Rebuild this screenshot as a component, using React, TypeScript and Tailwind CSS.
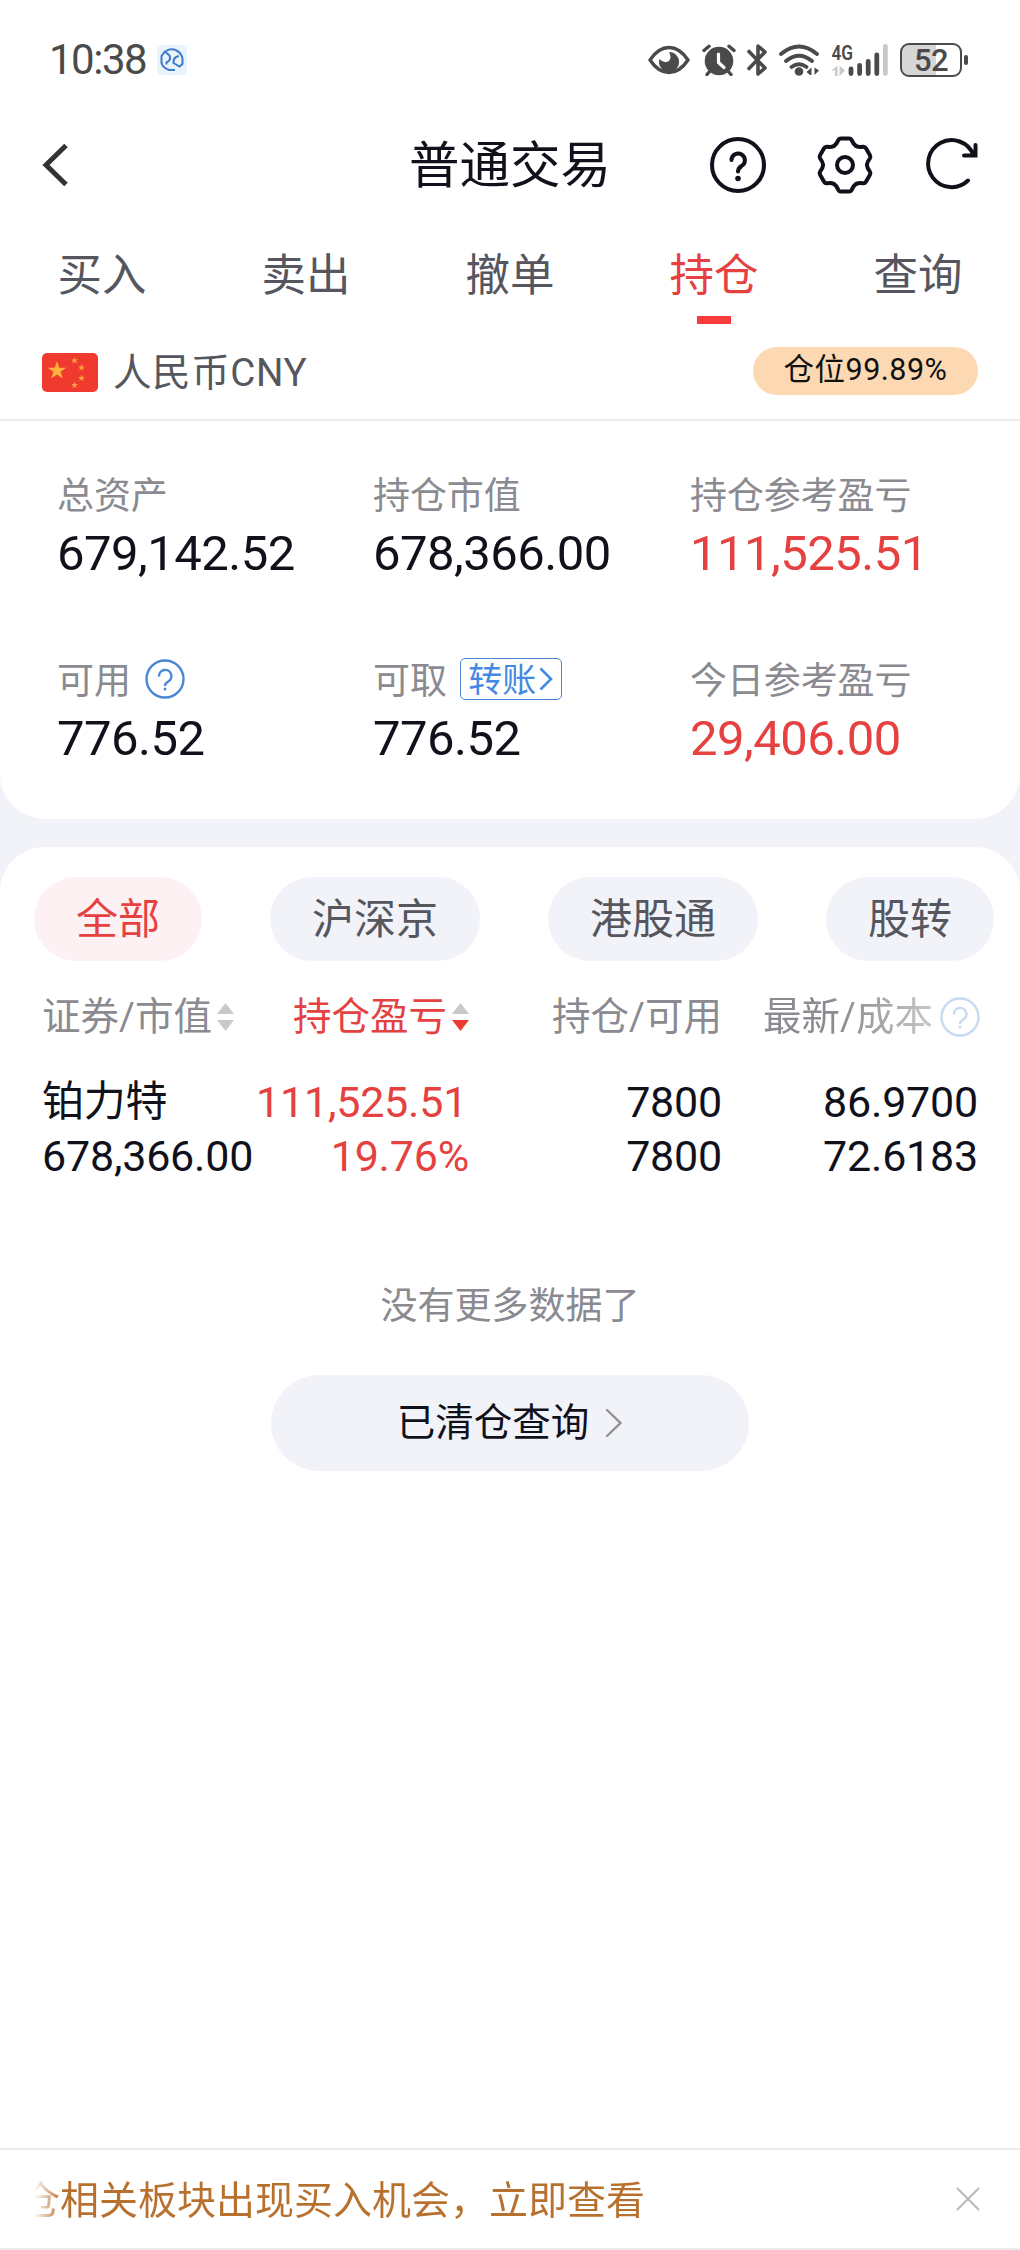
import type { ReactNode } from "react";

const tabs = ["买入", "卖出", "撤单", "持仓", "查询"];
const filters = ["全部", "沪深京", "港股通", "股转"];
const gearTeeth = [0, 60, 120, 180, 240, 300];

function StatusBar() {
  return (
    <div className="flex h-[120px] items-center justify-between pl-[49px] pr-[52px] text-[#4a4a4a]">
      <div className="flex items-center">
        <span className="w-[108px] whitespace-nowrap text-[42px] leading-[42px] tracking-[-1.500px]">10:38</span>
        <svg width="30" height="30" viewBox="0 0 30 30" fill="none">
          <rect width="30" height="30" rx="6" fill="#eaf2fb" />
          <g stroke="#3d7cc9" strokeWidth="2">
            <path d="M9 6Q14 3 19.500 5.500Q25 8.500 25.500 14V19L22.500 21.500L16.500 18Q16 12 22 11" />
            <path d="M18 25H12Q6 23 4.500 18V11L8 6.500L12.500 10.500Q14.500 15 9.500 17.500V19.500" />
          </g>
        </svg>
      </div>
      <div className="flex items-center">
        <svg width="42" height="32" viewBox="647 43 42 32" fill="none">
          <path d="M649 59C655 50 661 46.500 668 46.500S681 50 687 59C681 68 675 71.500 668 71.500S655 68 649 59Z" stroke="#4a4a4a" strokeWidth="3.400" strokeLinejoin="round" />
          <path d="M668 51A10 10 0 1 1 658.500 58Q663 63 668 60Q671 56 668 51Z" fill="#4a4a4a" />
        </svg>
        <svg className="ml-[12px]" width="34" height="32" viewBox="701 43 34 32" fill="none" stroke="#4a4a4a" strokeLinecap="round">
          <circle cx="718" cy="60" r="14.300" fill="#4a4a4a" stroke="none" />
          <path d="M703 49.500L708 45.200M733 49.500L728 45.200M706 73.500L709 70M730 73.500L727 70" strokeWidth="3.400" />
          <path d="M717.500 53V61.500L723 66.500" stroke="#fff" strokeWidth="3.200" />
        </svg>
        <svg className="ml-[11px]" width="21" height="32" viewBox="746 43 21 32" fill="none">
          <path d="M748 50.500L764 67L757 73V45L764 51L748 67.500" stroke="#4a4a4a" strokeWidth="3.600" strokeLinejoin="round" strokeLinecap="round" />
        </svg>
        <svg className="ml-[11px]" width="41" height="32" viewBox="778 43 41 32" fill="none" stroke="#4a4a4a" strokeWidth="3.800" strokeLinecap="round">
          <path d="M780 53Q798 38 816 53M785 60Q798 49.500 811 60M790.500 66Q798 60.500 805.500 66" />
          <circle cx="798" cy="70.500" r="4.300" fill="#4a4a4a" stroke="none" />
          <path d="M810.500 66.500V74H809L805.500 71ZM813.500 66.500V74L818 69.500Z" fill="#4a4a4a" stroke="none" />
        </svg>
        <svg className="ml-[11px]" width="58" height="34" viewBox="830 42 58 34" fill="none" strokeWidth="4.800" strokeLinecap="round">
          <text x="830.500" y="58.800" fill="#4a4a4a" stroke="none" fontFamily="Roboto" fontWeight="600" fontSize="20.500" textLength="21.500" lengthAdjust="spacingAndGlyphs">4G</text>
          <path d="M836.500 64.500V75H834V69L830 70ZM838.500 64.500V75L844 69.500Z" fill="#c9c9c9" />
          <path d="M850 68V72.500M858.600 64.500V72.500M867.200 60.500V72.500M875.800 54V72.500" stroke="#4a4a4a" />
          <path d="M884.400 45.500V72.500" stroke="#c9c9c9" />
        </svg>
        <div className="ml-[11px] flex items-center">
          <div className="flex h-[34px] w-[62px] items-center justify-center rounded-[9px] border-2 border-[#4a4a4a] bg-[linear-gradient(90deg,#d6d6d6_58%,#fff_58%)] text-[31px] font-medium leading-none tracking-[-0.500px]">
            52
          </div>
          <div className="ml-[2px] h-[10px] w-[4px] rounded-full bg-[#4a4a4a]" />
        </div>
      </div>
    </div>
  );
}

function HelpIcon({ className = "" }: { className?: string }) {
  return (
    <svg className={className} width="40" height="40" viewBox="0 0 40 40" fill="none" stroke="#4a86d2" strokeWidth="2.400">
      <circle cx="20" cy="20" r="18.500" />
      <path d="M14 17.500A6.200 6.200 0 1 1 23.200 22.500Q20 24.500 20 27" />
      <circle cx="20" cy="30" r="1.500" fill="#4a86d2" stroke="none" />
    </svg>
  );
}

function Header() {
  return (
    <div className="flex h-[90px] items-center pl-[40px] text-[#11111b]">
      <svg className="shrink-0" width="30" height="48" viewBox="40 140 30 48" fill="none">
        <path d="M66 144.500L46 164L66 183.500" stroke="#333" strokeWidth="5" />
      </svg>
      <h1 className="ml-[335px] w-[210px] shrink-0 whitespace-nowrap pt-[2px] text-center text-[50.500px] leading-[60px]">普通交易</h1>
      <svg className="ml-[93px] shrink-0" width="60" height="60" viewBox="708 134 60 60" fill="none" stroke="#11111b" strokeWidth="4">
        <circle cx="738" cy="164" r="26" />
        <path d="M731.500 159A6.700 6.700 0 1 1 741.500 165Q738 167.500 738 170.500" strokeLinecap="round" />
        <circle cx="738" cy="177.500" r="2.800" fill="#11111b" stroke="none" />
      </svg>
      <svg className="ml-[47px] shrink-0" width="60" height="60" viewBox="-30 -30 60 60" fill="none" stroke="#11111b" strokeWidth="4" strokeLinejoin="round" strokeLinecap="round">
        <circle r="8" />
        {gearTeeth.map((angle) => (
          <path
            key={angle}
            transform={`rotate(${angle})`}
            d="M-11 -19C-8.500 -20.500 -7.500 -23 -6.800 -24.700Q-6 -26.500 -4 -26.500H4Q6 -26.500 6.800 -24.700C7.500 -23 8.500 -20.500 11 -19"
          />
        ))}
      </svg>
      <svg className="ml-[47px] shrink-0" width="60" height="60" viewBox="922 134 60 60" fill="none" stroke="#11111b" strokeWidth="4" strokeLinecap="round">
        <path d="M968 179.500A23.500 23.500 0 1 1 973.500 154M975.500 144V154.500H964" />
      </svg>
    </div>
  );
}

function Stat({ label, value, red, children }: { label: string; value: string; red?: boolean; children?: ReactNode }) {
  return (
    <div className="flex flex-col">
      <div className="flex h-[46px] items-center text-[37px] leading-[46px] text-[#8a8a90]">
        <span className="pt-[5px] tracking-[-0.100px]">{label}</span>
        {children}
      </div>
      <div className={"mt-[9px] text-[49px] leading-[56px] tracking-[-0.500px] " + (red ? "text-[#e54141]" : "text-[#11111b]")}>{value}</div>
    </div>
  );
}

function Sort({ active }: { active?: boolean }) {
  return (
    <svg className="ml-[5px] shrink-0" width="17" height="28" viewBox="0 0 17 28">
      <path d="M0 11L8.500 0L17 11Z" fill="#c9c9c9" />
      <path d="M0 17L8.500 28L17 17Z" fill={active ? "#ea3c30" : "#c9c9c9"} />
    </svg>
  );
}

export default function App() {
  return (
    <div className="flex h-[2250px] w-[1020px] flex-col overflow-hidden bg-[#f2f3f8] font-[Roboto,'Noto_Sans_CJK_SC',sans-serif] text-[#11111b]">
      <section className="h-[819px] shrink-0 rounded-b-[45px] bg-white">
        <StatusBar />
        <Header />
        <nav className="grid h-[118px] grid-cols-5 text-[44.500px] text-[#55565e]">
          {tabs.map((tab) => (
            <div key={tab} className={"flex flex-col items-center pt-[34px] " + (tab === "持仓" ? "text-[#e54141]" : "")}>
              <span className="leading-[64px]">{tab}</span>
              {tab === "持仓" && <span className="mt-[8px] h-[8px] w-[34px] bg-[#f83b3b]" />}
            </div>
          ))}
        </nav>
        <div className="flex h-[93px] items-center border-b-2 border-[#ececee] pb-[3px] pl-[42px] pr-[42px]">
          <svg width="56" height="39" viewBox="0 0 56 39">
            <rect width="56" height="39" rx="5" fill="#f0392f" />
            <path fill="#fdb23c" d="M15 8L17.200 14.700H24.300L18.600 18.800L20.800 25.600L15 21.400L9.200 25.600L11.400 18.800L5.700 14.700H12.800Z" />
            <g fill="#fba03c">
              <path id="s" d="M32.500 4L33.400 6.400H36L34 8L34.700 10.500L32.500 9L30.300 10.500L31 8L29 6.400H31.600Z" />
              <use href="#s" x="7" y="7" />
              <use href="#s" x="7" y="17.500" />
              <use href="#s" y="24.500" />
            </g>
          </svg>
          <span className="ml-[15px] pt-px text-[38.500px] leading-[50px] tracking-[0.600px] text-[#55565e]">人民币CNY</span>
          <div className="mb-[3px] ml-auto flex h-[48px] w-[225px] items-center justify-center rounded-full bg-[#fcd9b2] text-[30.500px] leading-none tracking-[0.500px] text-[#111]">
            仓位99.89%
          </div>
        </div>
        <div className="grid grid-cols-[316px_317px_1fr] gap-y-[74px] pl-[57px] pt-[50px]">
          <Stat label="总资产" value="679,142.52" />
          <Stat label="持仓市值" value="678,366.00" />
          <Stat label="持仓参考盈亏" value="111,525.51" red />
          <Stat label="可用" value="776.52">
            <HelpIcon className="ml-[14px]" />
          </Stat>
          <Stat label="可取" value="776.52">
            <span className="ml-[13px] flex h-[42px] w-[102px] items-center justify-center gap-[3px] rounded-[5px] border-[1.500px] border-[#4a86d2] text-[34px] leading-none text-[#4489e4]">
              <span className="pt-[2px]">转账</span>
              <svg width="14" height="24" viewBox="0 0 14 24" fill="none">
                <path d="M1.500 1.500L12 12L1.500 22.500" stroke="#4489e4" strokeWidth="2.600" />
              </svg>
            </span>
          </Stat>
          <Stat label="今日参考盈亏" value="29,406.00" red />
        </div>
      </section>

      <section className="mt-[28px] flex grow flex-col rounded-t-[45px] bg-white">
        <div className="flex justify-between pl-[34px] pr-[26px] pt-[30px] text-[42px] leading-[84px] text-[#55565e]">
          {filters.map((f, i) => (
            <div key={f} className={"h-[84px] rounded-full px-[42px] pt-px " + (i === 0 ? "bg-[#fef1f3] text-[#e54141]" : "bg-[#f2f3f8]")}>
              {f}
            </div>
          ))}
        </div>

        <div className="mt-[31px] grid h-[50px] grid-cols-[214px_213px_253px_1fr] items-center pl-[42px] pr-[40px] text-[38.500px] leading-[50px] text-[#8a8a90]">
          <div className="flex items-center whitespace-nowrap">
            证券/市值
            <Sort />
          </div>
          <div className="flex items-center justify-end whitespace-nowrap text-[#e54141]">
            持仓盈亏
            <Sort active />
          </div>
          <div className="text-right">持仓/可用</div>
          <div className="flex items-center justify-end whitespace-nowrap">
            <span className="bg-[linear-gradient(90deg,#8a8a90_45%,#c8c8ca)] bg-clip-text text-transparent">最新/成本</span>
            <HelpIcon className="ml-[7px] shrink-0 opacity-30" />
          </div>
        </div>

        <div className="mt-[33px] grid grid-cols-[214px_213px_253px_1fr] pl-[42px] pr-[42px] text-right text-[43px] leading-[54px] tracking-[-0.200px]">
          <div className="text-left text-[42px]">铂力特</div>
          <div className="whitespace-nowrap pr-[2px] text-[#e54141]">111,525.51</div>
          <div>7800</div>
          <div>86.9700</div>
          <div className="text-left">678,366.00</div>
          <div className="text-[#e54141]">19.76%</div>
          <div>7800</div>
          <div>72.6183</div>
        </div>

        <div className="mt-[94px] text-center text-[37px] leading-[60px] text-[#8a8a90]">没有更多数据了</div>
        <div className="mx-auto mt-[38px] flex h-[96px] w-[478px] items-center justify-center rounded-full bg-[#f2f3f8] text-[38.500px]">
          已清仓查询
          <svg className="ml-[16px]" width="18" height="30" viewBox="0 0 18 30" fill="none">
            <path d="M2 2L15.500 15L2 28" stroke="#8f9095" strokeWidth="2.400" strokeLinecap="round" />
          </svg>
        </div>

        <footer className="mt-auto flex h-[102px] items-center justify-between border-y-2 border-[#ececee] pl-[34px] pr-[40px]">
          <div className="overflow-hidden bg-[linear-gradient(90deg,#b8702e00,#b8702e_28px)] bg-clip-text pt-[3px] text-transparent">
            <span className="-ml-[13px] text-[39px] leading-[60px]">仓相关板块出现买入机会，立即查看</span>
          </div>
          <svg width="24" height="24" viewBox="0 0 24 24" stroke="#bcbcbe" strokeWidth="2.200">
            <path d="M1 1L23 23M23 1L1 23" />
          </svg>
        </footer>
      </section>
    </div>
  );
}
